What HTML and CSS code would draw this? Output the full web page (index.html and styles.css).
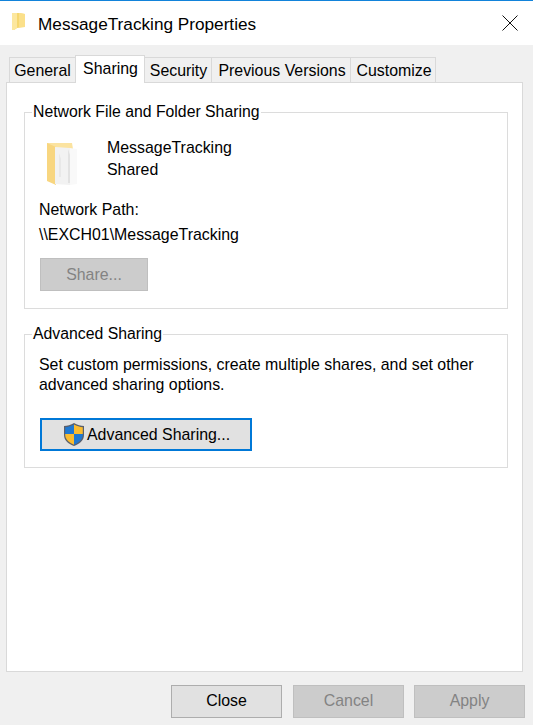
FILE: index.html
```html
<!DOCTYPE html>
<html>
<head>
    <title>MessageTracking Properties</title>
    <link rel="stylesheet" href="styles.css">
</head>
<body>
    <div class="window">
        <div class="titlebar">
            <svg class="title-icon" width="16" height="20" viewBox="0 0 16 20">
                <path d="M1 1h7l6 1v13l-8 1-3 2H1z" fill="#f6d76f"/>
                <path d="M8 1l6 1v13H8z" fill="#fbe08a"/>
                <path d="M1 1h5v15l-3 2H1z" fill="#fce79f"/>
            </svg>
            <span class="title">MessageTracking Properties</span>
            <svg class="close-icon" width="16" height="16" viewBox="0 0 16 16">
                <path d="M0.5 0.5L15.5 15.5M15.5 0.5L0.5 15.5" stroke="#111" stroke-width="1" fill="none"/>
            </svg>
        </div>
        <div class="content">
            <div class="tabs">
                <div class="tab tab-general">General</div>
                <div class="tab active tab-sharing">Sharing</div>
                <div class="tab tab-security">Security</div>
                <div class="tab tab-previous">Previous Versions</div>
                <div class="tab tab-customize">Customize</div>
            </div>
            <div class="panel">
                <fieldset class="group group-network">
                    <legend>Network File and Folder Sharing</legend>
                    <div class="share-head">
                        <svg class="folder-icon" width="36" height="46" viewBox="0 0 36 46">
                            <path d="M3 2h25l1 6v32H12l-9-1z" fill="#fbe3a0"/>
                            <path d="M3 2l9 4v38l-9-4z" fill="#f8d680"/>
                            <path d="M11 6l15 1v37l-15-1z" fill="#f2f2f2"/>
                            <path d="M26 7l7 1v35l-7 1z" fill="#f9f9f9"/>
                            <path d="M24 8l2 6v28h-2z" fill="#e2e2e2"/>
                            <path d="M15 12l2 6v18h-2z" fill="#e8e8e8"/>
                        </svg>
                        <div class="share-name">
                            <div>MessageTracking</div>
                            <div>Shared</div>
                        </div>
                    </div>
                    <div class="path-label">Network Path:</div>
                    <div class="path-value">\\EXCH01\MessageTracking</div>
                    <button class="btn disabled share-btn">Share...</button>
                </fieldset>
                <fieldset class="group group-advanced">
                    <legend>Advanced Sharing</legend>
                    <p class="advanced-text">Set custom permissions, create multiple shares, and set other advanced sharing options.</p>
                    <button class="btn focused advanced-btn">
                        <svg class="shield" width="24" height="25" viewBox="0 0 24 25">
                            <path d="M12 1C9 3 5 4 2 4v9c0 6 5 9 10 11 5-2 10-5 10-11V4c-3 0-7-1-10-3z" fill="#5a5f6b"/>
                            <path d="M12 2.500C9.500 4 6 5 3.200 5.200V12H12z" fill="#1f78d1"/>
                            <path d="M12 2.500c2.500 1.500 6 2.500 8.800 2.700V12H12z" fill="#fbbc2f"/>
                            <path d="M3.200 12H12v10.700C8 21 3.600 18.500 3.200 13z" fill="#fbbc2f"/>
                            <path d="M20.800 12H12v10.700c4-1.700 8.400-4.200 8.800-9.700z" fill="#1f78d1"/>
                        </svg>
                        <span>Advanced Sharing...</span>
                    </button>
                </fieldset>
            </div>
            <div class="footer">
                <button class="btn">Close</button>
                <button class="btn disabled">Cancel</button>
                <button class="btn disabled">Apply</button>
            </div>
        </div>
    </div>
</body>
</html>
```
FILE: styles.css
```css
html, body {
    margin: 0;
    padding: 0;
    height: 100%;
}
body {
    font-family: "Liberation Sans", Arial, sans-serif;
    font-size: 15.9px;
    color: #000;
    background: #f0f0f0;
    overflow: hidden;
}
.window {
    height: 725px;
    display: flex;
    flex-direction: column;
    border-top: 1px solid #1283da;
    box-sizing: border-box;
}
.titlebar {
    height: 44px;
    flex: none;
    background: #fff;
    display: flex;
    align-items: center;
    padding: 0 15px 0 11px;
}
.title-icon {
    margin-right: 11px;
    margin-top: -2px;
}
.title {
    font-size: 17.2px;
    flex: 1;
    padding-top: 2px;
}
.close-icon {
    display: block;
}
.content {
    flex: 1;
    display: flex;
    flex-direction: column;
    padding: 10px 10px 8px 6px;
}
.tabs {
    display: flex;
    align-items: flex-end;
    height: 28px;
    padding-left: 3px;
    position: relative;
    z-index: 1;
    margin-bottom: -1px;
}
.tab {
    box-sizing: border-box;
    height: 26px;
    border: 1px solid #d9d9d9;
    border-left: none;
    background: #f0f0f0;
    text-align: center;
    line-height: 26px;
}
.tab-general {
    width: 67px;
    border-left: 1px solid #d9d9d9;
}
.tab-sharing {
    width: 70px;
}
.tab-security {
    width: 67px;
    padding-left: 1px;
}
.tab-previous {
    width: 139px;
    padding-left: 2px;
}
.tab-customize {
    width: 85px;
    padding-left: 2px;
}
.tab.active {
    height: 28px;
    background: #fff;
    border-left: 1px solid #d9d9d9;
    border-bottom: none;
    line-height: 26px;
    margin-left: -1px;
    padding-left: 1px;
}
.panel {
    box-sizing: border-box;
    width: 517px;
    height: 590px;
    background: #fff;
    border: 1px solid #d9d9d9;
    padding: 18px 14px 0 17px;
}
.group {
    margin: 0;
    padding: 0 14px;
    border: 1px solid #dcdcdc;
    min-width: 0;
    box-sizing: border-box;
}
.group legend {
    padding: 1px 1px 1px;
    margin-left: -7px;
    line-height: 20px;
    font-size: 15.8px;
    background: #fff;
}
.group-network {
    height: 208px;
}
.group-advanced {
    height: 145px;
    margin-top: 14px;
}
.share-head {
    display: flex;
    height: 72px;
}
.folder-icon {
    margin: 18px 0 0 5px;
}
.share-name {
    margin: 14px 0 0 27px;
    line-height: 22px;
}
.path-label {
    line-height: 22px;
    margin-top: 4px;
}
.path-value {
    line-height: 22px;
    margin-top: 3px;
}
.btn {
    box-sizing: border-box;
    width: 111px;
    height: 33px;
    font-family: inherit;
    font-size: 15.9px;
    color: #000;
    background: #e1e1e1;
    border: 1px solid #adadad;
    padding: 0;
    display: block;
}
.btn.disabled {
    background: #cccccc;
    border-color: #bfbfbf;
    color: #838383;
}
.share-btn {
    width: 108px;
    margin: 12px 0 0 1px;
}
.advanced-text {
    margin: 10px 0 0;
    line-height: 20px;
}
.btn.focused {
    border: 2px solid #0078d7;
}
.advanced-btn {
    width: 212px;
    margin: 23px 0 0 1px;
    display: flex;
    align-items: center;
    padding-left: 20px;
}
.advanced-btn span {
    margin-left: 1px;
}
.shield {
    flex: none;
}
.footer {
    display: flex;
    justify-content: flex-end;
    gap: 10px;
    margin-top: 13px;
    margin-right: -2px;
}
.footer .btn {
    padding-bottom: 2px;
}
.footer .btn:first-child {
    margin-right: 1px;
}
```
